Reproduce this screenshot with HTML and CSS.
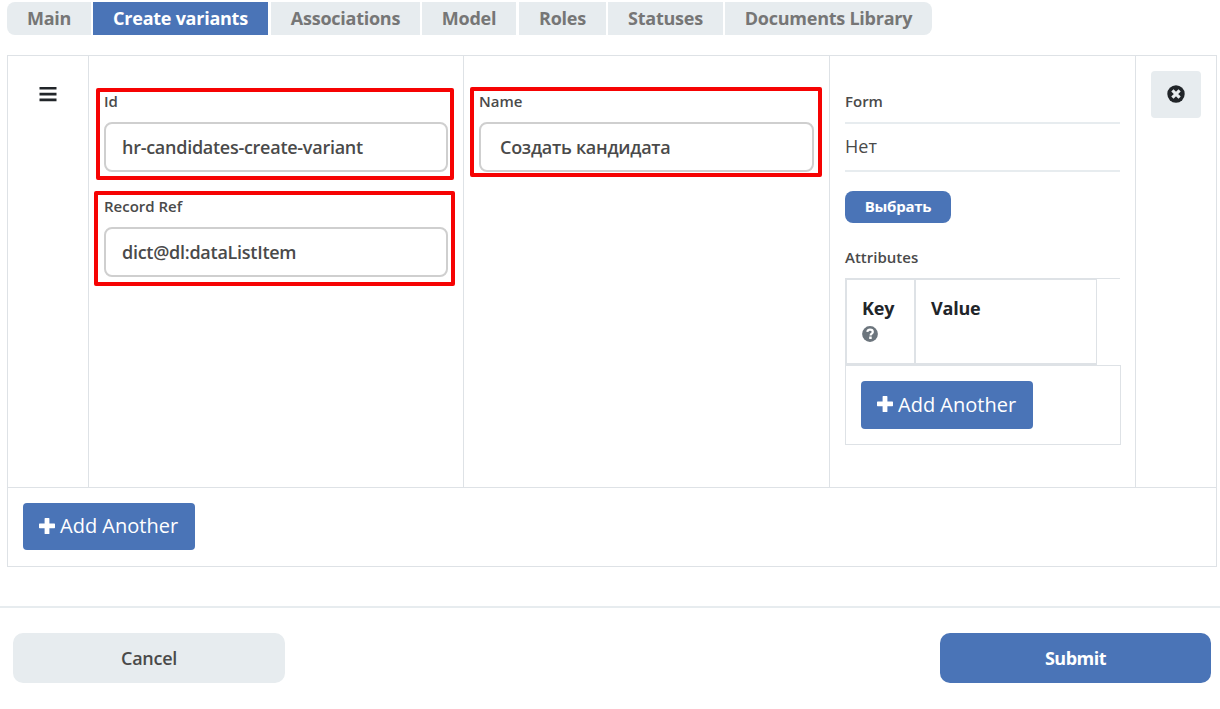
FILE: index.html
```
<!DOCTYPE html>
<html lang="en">
<head>
<meta charset="utf-8">
<title>Create variants</title>
<link rel="stylesheet" href="styles.css">
</head>
<body>
<nav class="tabs">
  <span class="tab tab-main"><span>Main</span></span>
  <span class="tab tab-create active"><span>Create variants</span></span>
  <span class="tab tab-assoc"><span>Associations</span></span>
  <span class="tab tab-model"><span>Model</span></span>
  <span class="tab tab-roles"><span>Roles</span></span>
  <span class="tab tab-statuses"><span>Statuses</span></span>
  <span class="tab tab-docs"><span>Documents Library</span></span>
</nav>
<main class="panel">
  <section class="row">
    <div class="cell drag">
      <svg width="18" height="15" viewBox="0 0 18 15"><path d="M.5 0h17v2.600h-17zM.5 5.800h17v2.600h-17zM.5 11.600h17v2.600h-17z" fill="#212529"/></svg>
    </div>
    <div class="cell">
      <div class="field">
        <label class="label">Id</label>
        <div class="input"><span>hr-candidates-create-variant</span></div>
        <div class="mark mark-id"></div>
      </div>
      <div class="field">
        <label class="label">Record Ref</label>
        <div class="input"><span>dict@dl:dataListItem</span></div>
        <div class="mark mark-ref"></div>
      </div>
    </div>
    <div class="cell">
      <div class="field">
        <label class="label">Name</label>
        <div class="input input-name"><span>Создать кандидата</span></div>
        <div class="mark mark-name"></div>
      </div>
    </div>
    <div class="cell">
      <label class="label">Form</label>
      <div class="value">Нет</div>
      <button class="pick">Выбрать</button>
      <label class="label">Attributes</label>
      <div class="attrs">
        <div class="grid-head">
          <div class="key">Key
            <svg width="16" height="16" viewBox="0 0 16 16"><circle cx="8" cy="8" r="7.9" fill="#6c757d"/><path d="M5.3 5.9C5.6 4.3 6.6 3.6 8 3.6c1.6 0 2.8.9 2.8 2.3 0 1.7-2.2 1.8-2.2 3.5" fill="none" stroke="#fff" stroke-width="2.200"/><rect x="7.2" y="10.5" width="2.500" height="2.500" fill="#fff"/></svg>
          </div>
          <div class="val">Value</div>
        </div>
        <div class="grid-foot">
          <button class="add"><svg width="16" height="16" viewBox="0 0 16 16"><path d="M6.2 0h3.6q.6 0 .6.6v5h5q.6 0 .6.6v3.4q0 .6-.6.6h-5v5.2q0 .6-.6.6H6.2q-.6 0-.6-.6v-5.2H.6Q0 10.200 0 9.600V6.200q0-.6.6-.6h5v-5q0-.6.6-.6z" fill="#fff"/></svg><span>Add Another</span></button>
        </div>
      </div>
    </div>
    <div class="cell">
      <button class="remove"><svg width="18" height="18" viewBox="0 0 18 18"><circle cx="9" cy="9" r="8.7" fill="#212529"/><path d="M5.400 5.400l7.200 7.200M12.600 5.400l-7.200 7.200" stroke="#e8edef" stroke-width="3.200"/></svg></button>
    </div>
  </section>
  <div class="panel-foot">
    <button class="add add-outer"><svg width="16" height="16" viewBox="0 0 16 16"><path d="M6.2 0h3.6q.6 0 .6.6v5h5q.6 0 .6.6v3.4q0 .6-.6.6h-5v5.2q0 .6-.6.6H6.2q-.6 0-.6-.6v-5.2H.6Q0 10.200 0 9.600V6.200q0-.6.6-.6h5v-5q0-.6.6-.6z" fill="#fff"/></svg><span>Add Another</span></button>
  </div>
</main>
<footer class="actions">
  <button class="action cancel">Cancel</button>
  <button class="action submit">Submit</button>
</footer>
</body>
</html>
```
FILE: styles.css
```
* { box-sizing: border-box; }
body { margin: 0; width: 1220px; height: 709px; overflow: hidden; background: #fff; color: #4a4a4a; font-family: "Open Sans", sans-serif; }
button { border: 0; padding: 0; font-family: inherit; white-space: nowrap; }
svg { display: block; flex: none; }

.tabs { display: flex; gap: 2px; height: 35px; padding: 2px 0 0 7px; }
.tab { display: flex; justify-content: center; align-items: center; height: 33px; background: #e7ecef; color: #767676; font-size: 18px; font-weight: 700; line-height: 33px; letter-spacing: -0.25px; white-space: nowrap; }
.active { background: #4a74b7; color: #fff; }
.tab-main { width: 84px; border-radius: 8px 0 0 8px; }
.tab-create { width: 175px; }
.tab-assoc { width: 149px; margin-left: 1px; }
.tab-model { width: 94px; }
.tab-roles { width: 87px; margin-left: 1px; }
.tab-statuses { width: 115px; }
.tab-docs { width: 207px; border-radius: 0 8px 8px 0; }

.panel { width: 1210px; height: 512px; margin: 20px 0 0 7px; border: 1px solid #dee2e6; }
.row { display: grid; grid-template-columns: 81px 375px 366px 306px 80px; height: 432px; border-bottom: 1px solid #dee2e6; }
.cell { padding: 15px; border-right: 1px solid #dee2e6; }
.cell:last-child { border-right: 0; }
.drag { padding: 31px 0 0 31px; }

.field { position: relative; height: 105px; }
.label { display: block; height: 51px; padding-top: 20px; font-size: 15px; font-weight: 600; line-height: 21px; }
.input { display: flex; align-items: center; width: 344px; height: 50px; padding-left: 16px; border: 2px solid #cfcfcf; border-radius: 8px; font-size: 18px; font-weight: 600; letter-spacing: -0.27px; white-space: nowrap; }
.input-name { width: 335px; padding-left: 19px; }
.mark { position: absolute; border: 4px solid #f60303; border-radius: 2px; }
.mark-id { left: -8px; top: 17px; width: 358px; height: 92px; }
.mark-ref { left: -10px; top: 15px; width: 361px; height: 95px; }
.mark-name { left: -9px; top: 16px; width: 352px; height: 90px; }

.value { height: 50px; border: solid #e7ecef; border-width: 2px 0; font-size: 18px; line-height: 45px; }
.pick { display: block; width: 106px; height: 32px; margin: 19px 0 4px; padding-bottom: 2px; border-radius: 8px; background: #4a74b7; color: #fff; font-size: 15px; font-weight: 700; letter-spacing: -0.25px; }
.attrs { width: 276px; }
.grid-head { display: flex; height: 87px; background: linear-gradient(#dee2e6, #dee2e6) 0 0 / 275px 1px no-repeat; color: #212529; font-size: 18px; font-weight: 700; line-height: 27px; letter-spacing: -0.2px; }
.key { width: 69px; padding: 15px 0 0 15px; border: solid #dee2e6; border-width: 2px 0 2px 2px; }
.key svg { margin-top: 4px; }
.val { width: 183px; padding: 15px 0 0 15px; border: solid #dee2e6; border-width: 2px 1px 2px 2px; }
.grid-foot { height: 80px; padding: 15px; border: 1px solid #dee2e6; }
.add { display: flex; align-items: center; gap: 5px; width: 172px; height: 48px; padding: 0 0 2px 16px; border-radius: 4px; background: #4a74b7; color: #fff; font-size: 20px; }
.add-outer { height: 47px; }
.panel-foot { padding: 15px; }
.remove { display: flex; justify-content: center; align-items: center; width: 50px; height: 47px; padding-bottom: 1px; border-radius: 4px; background: #e7ecef; }

.actions { display: flex; justify-content: space-between; margin-top: 39px; padding: 25px 9px 0 13px; border-top: 2px solid #e7ecef; }
.action { height: 50px; border-radius: 10px; font-size: 18px; font-weight: 600; letter-spacing: -0.27px; }
.cancel { width: 272px; background: #e7ecef; color: #4a4a4a; }
.submit { width: 271px; background: #4a74b7; color: #fff; font-weight: 700; letter-spacing: -0.5px; }
```
